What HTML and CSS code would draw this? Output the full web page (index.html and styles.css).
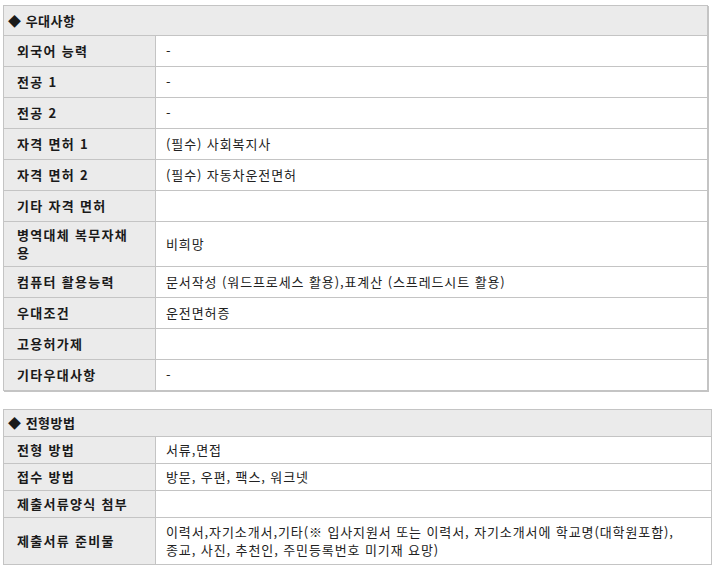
FILE: index.html
```html
<!DOCTYPE html>
<html lang="ko">
<head>
<meta charset="utf-8">
<link rel="stylesheet" href="styles.css">
</head>
<body>
<div class="page">
  <table class="info info-pref">
    <colgroup><col class="c-label"><col></colgroup>
    <tr class="head"><th class="sec" colspan="2">◆ 우대사항</th></tr>
    <tr><th>외국어 능력</th><td>-</td></tr>
    <tr><th>전공 1</th><td>-</td></tr>
    <tr><th>전공 2</th><td>-</td></tr>
    <tr><th>자격 면허 1</th><td>(필수) 사회복지사</td></tr>
    <tr><th>자격 면허 2</th><td>(필수) 자동차운전면허</td></tr>
    <tr><th>기타 자격 면허</th><td></td></tr>
    <tr><th>병역대체 복무자채용</th><td>비희망</td></tr>
    <tr><th>컴퓨터 활용능력</th><td>문서작성 (워드프로세스 활용),표계산 (스프레드시트 활용)</td></tr>
    <tr><th>우대조건</th><td>운전면허증</td></tr>
    <tr><th>고용허가제</th><td></td></tr>
    <tr><th>기타우대사항</th><td>-</td></tr>
  </table>
  <table class="info info-select">
    <colgroup><col class="c-label"><col></colgroup>
    <tr class="head"><th class="sec" colspan="2">◆ 전형방법</th></tr>
    <tr><th>전형 방법</th><td>서류,면접</td></tr>
    <tr><th>접수 방법</th><td>방문, 우편, 팩스, 워크넷</td></tr>
    <tr><th>제출서류양식 첨부</th><td></td></tr>
    <tr class="tall"><th>제출서류 준비물</th><td>이력서,자기소개서,기타(※ 입사지원서 또는 이력서, 자기소개서에 학교명(대학원포함), 종교, 사진, 추천인, 주민등록번호 미기재 요망)</td></tr>
  </table>
</div>
</body>
</html>
```
FILE: styles.css
```css
html, body {
  margin: 0;
  padding: 0;
  background: #fff;
}
.page {
  padding: 5px 0 0 3px;
  font-family: "Noto Sans CJK KR", "Noto Sans", sans-serif;
  font-size: 13px;
  color: #222;
}
.info {
  border-collapse: collapse;
  table-layout: fixed;
}
.c-label {
  width: 152px;
}
.info th, .info td {
  border: 1px solid #c4c4c4;
  line-height: 18px;
  vertical-align: middle;
  text-align: left;
  box-sizing: border-box;
}
.info th {
  background: #ebebeb;
  font-weight: bold;
  letter-spacing: 1.3px;
  padding: 4px 18px 4px 13px;
  color: #1a1a1a;
}
.info td {
  background: #fff;
  padding: 4px 10px;
  letter-spacing: 0.9px;
  word-break: keep-all;
  color: #222;
}
.info th.sec {
  padding-left: 4px;
  letter-spacing: 0.5px;
}
.info-pref {
  width: 705px;
  box-shadow: 1px 1px 0 #c4c4c4;
}
.info-pref th, .info-pref td {
  height: 31px;
}
.info-pref .head th {
  height: 30px;
}
.info-select {
  width: 709px;
  margin-top: 18px;
}
.info-select th, .info-select td {
  height: 27px;
  padding-top: 4px;
  padding-bottom: 4px;
}
.info-select .tall th, .info-select .tall td {
  padding-top: 5px;
  padding-bottom: 5px;
}
```
